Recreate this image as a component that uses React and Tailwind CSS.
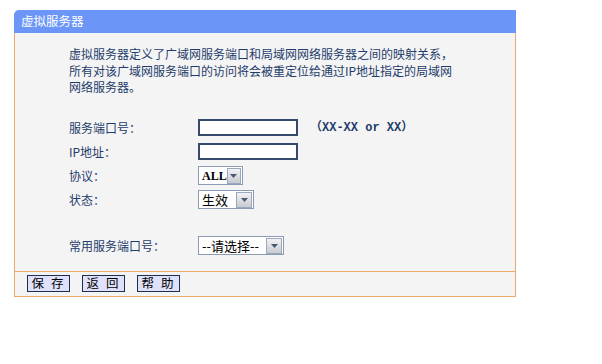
import React from "react";

const cjk = { fontFamily: '"Noto Sans CJK SC", "Liberation Sans", sans-serif' };

function DropButton() {
  return (
    <span className="flex h-[16px] w-[16px] items-center justify-center border border-[#9aa8bc] bg-gradient-to-b from-[#f2f2f4] to-[#c9cbd2]">
      <svg width="7" height="4" viewBox="0 0 7 4">
        <path d="M0 0h7L3.5 4z" fill="#4b5a74" />
      </svg>
    </span>
  );
}

function FakeSelect({ value, width, height, textClass }) {
  return (
    <div
      className={`flex items-center justify-between border border-[#8a9bb3] bg-white pl-[3px] pr-[1px] ${width} ${height}`}
    >
      <span className={`leading-none text-black ${textClass}`}>{value}</span>
      <DropButton />
    </div>
  );
}

function Row({ label, children }) {
  return (
    <div className="flex h-[24px] items-center">
      <div className="w-[129px] text-[12px] text-[#1f3c6a]">{label}</div>
      {children}
    </div>
  );
}

export default function App() {
  return (
    <div className="h-[364px] w-[602px] bg-white pl-[14px] pt-[10px]" style={cjk}>
      <div className="w-[502px]">
        <div className="flex h-[23px] items-center rounded-tl-[5px] bg-[#6b96f7] pl-[7px] text-[12.5px] text-white">
          虚拟服务器
        </div>
        <div className="w-[502px] border-x border-b border-[#eaaa6c] bg-[#f4f4f5]">
          <div className="pl-[54px] pt-[13px] text-[12px] leading-[16.5px] text-[#1f3c6a]">
            <p>虚拟服务器定义了广域网服务端口和局域网网络服务器之间的映射关系，</p>
            <p>所有对该广域网服务端口的访问将会被重定位给通过IP地址指定的局域网</p>
            <p>网络服务器。</p>
          </div>
          <div className="pl-[54px] pt-[20px]">
            <Row label="服务端口号：">
              <div className="h-[17px] w-[100px] border-2 border-[#34496b] bg-white" />
              <span
                className="ml-[12px] text-[12px] font-bold text-[#1f3c6a]"
                style={{ fontFamily: '"Liberation Mono", "Noto Sans CJK SC", monospace' }}
              >
                （XX-XX or XX）
              </span>
            </Row>
            <Row label="IP地址：">
              <div className="h-[17px] w-[100px] border-2 border-[#34496b] bg-white" />
            </Row>
            <Row label="协议：">
              <FakeSelect
                value="ALL"
                width="w-[45px]"
                height="h-[19px]"
                textClass="text-[12px] font-bold [font-family:'Liberation_Serif',serif]"
              />
            </Row>
            <Row label="状态：">
              <FakeSelect value="生效" width="w-[56px]" height="h-[19px]" textClass="text-[13px]" />
            </Row>
            <div className="h-[22px]" />
            <Row label="常用服务端口号：">
              <FakeSelect value="--请选择--" width="w-[86px]" height="h-[19px]" textClass="text-[13px]" />
            </Row>
          </div>
          <div className="h-[13px]" />
          <div className="flex h-[25px] items-start gap-[12px] border-t border-[#eaaa6c] pl-[12px] pt-[3px]">
            {["保 存", "返 回", "帮 助"].map((b) => (
              <button
                key={b}
                className="flex h-[17px] w-[43px] items-center justify-center border border-[#1d2f4f] bg-[#dfe1fb] text-[12.5px] leading-none tracking-[2px] text-black"
              >
                {b}
              </button>
            ))}
          </div>
        </div>
      </div>
    </div>
  );
}
